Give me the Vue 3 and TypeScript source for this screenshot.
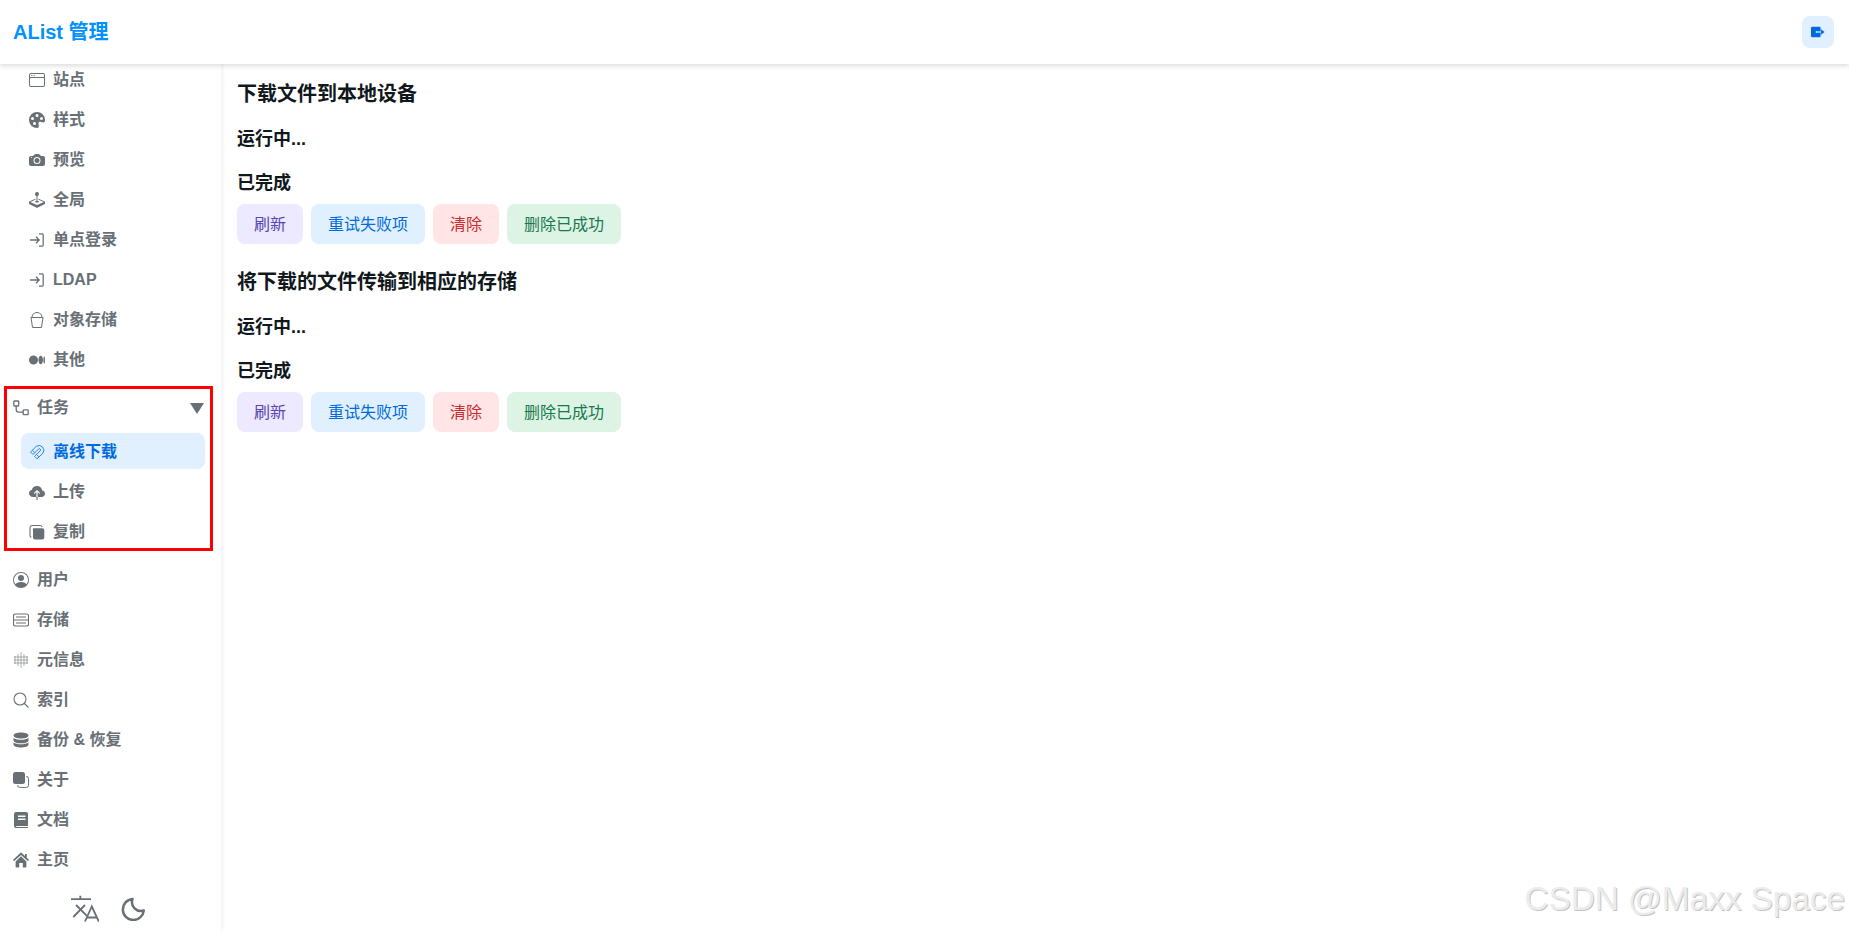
<script setup lang="ts">
interface Shape { d: string; s?: boolean; w?: number }
interface Item { label: string; icon: Shape[]; active?: boolean }

const login: Shape[] = [
  { d: 'M1 8h9M7 4.800 10.200 8 7 11.200M10 1.800h3a1.200 1.200 0 0 1 1.200 1.200v10a1.200 1.200 0 0 1-1.200 1.200h-3', s: true, w: 1.300 },
]
const icons: Record<string, Shape[]> = {
  window: [
    { d: 'M2.500 4a.5.500 0 1 0 0-1 .5.500 0 0 0 0 1zm2-.5a.5.500 0 1 1-1 0 .5.500 0 0 1 1 0zm1 .5a.5.500 0 1 0 0-1 .5.500 0 0 0 0 1z' },
    { d: 'M2 1a2 2 0 0 0-2 2v10a2 2 0 0 0 2 2h12a2 2 0 0 0 2-2V3a2 2 0 0 0-2-2H2zm13 2v2H1V3a1 1 0 0 1 1-1h12a1 1 0 0 1 1 1zM2 14a1 1 0 0 1-1-1V6h14v7a1 1 0 0 1-1 1H2z' },
  ],
  palette: [{ d: 'M12.433 10.070C14.133 10.585 16 11.150 16 8a8 8 0 1 0-8 8c1.996 0 1.826-1.504 1.649-3.080-.124-1.101-.252-2.237.351-2.920.465-.527 1.420-.237 2.433.070zM8 5a1.500 1.500 0 1 1 0-3 1.500 1.500 0 0 1 0 3zm4.500 3a1.500 1.500 0 1 1 0-3 1.500 1.500 0 0 1 0 3zM5 6.500a1.500 1.500 0 1 1-3 0 1.500 1.500 0 0 1 3 0zm.5 6.500a1.500 1.500 0 1 1 0-3 1.500 1.500 0 0 1 0 3z' }],
  camera: [
    { d: 'M10.500 8.500a2.500 2.500 0 1 1-5 0 2.500 2.500 0 0 1 5 0z' },
    { d: 'M2 4a2 2 0 0 0-2 2v6a2 2 0 0 0 2 2h12a2 2 0 0 0 2-2V6a2 2 0 0 0-2-2h-1.172a2 2 0 0 1-1.414-.586l-.828-.828A2 2 0 0 0 9.172 2H6.828a2 2 0 0 0-1.414.586l-.828.828A2 2 0 0 1 3.172 4H2zm.5 2a.5.500 0 1 1 0-1 .5.500 0 0 1 0 1zm9 2.500a3.500 3.500 0 1 1-7 0 3.500 3.500 0 0 1 7 0z' },
  ],
  joystick: [
    { d: 'M10 2a2 2 0 0 1-1.500 1.937v5.087c.863.083 1.500.377 1.500.726 0 .414-.895.750-2 .750s-2-.336-2-.750c0-.350.637-.643 1.500-.726V3.937A2 2 0 1 1 10 2z' },
    { d: 'M0 9.665v1.717a1 1 0 0 0 .553.894l6.553 3.277a2 2 0 0 0 1.788 0l6.553-3.277a1 1 0 0 0 .553-.894V9.665c0-.1-.060-.190-.152-.230L9.500 6.715v.993l5.227 2.178a.125.125 0 0 1 .001.230l-5.940 2.546a2 2 0 0 1-1.576 0l-5.940-2.546a.125.125 0 0 1 .001-.230L6.500 7.708l-.013-.988L.152 9.435a.25.250 0 0 0-.152.230z' },
  ],
  login,
  bucket: [{ d: 'M2.522 5H2a.5.500 0 0 0-.494.574l1.372 9.149A1.500 1.500 0 0 0 4.360 16h7.278a1.500 1.500 0 0 0 1.483-1.277l1.373-9.149A.5.500 0 0 0 14 5h-.522A5.500 5.500 0 0 0 2.522 5zm1.005 0a4.500 4.500 0 0 1 8.945 0H3.527zm9.892 1-1.286 8.574a.5.500 0 0 1-.494.426H4.360a.5.500 0 0 1-.494-.426L2.580 6h10.838z' }],
  medium: [{ d: 'M9.025 8c0 2.485-2.020 4.500-4.513 4.500A4.506 4.506 0 0 1 0 8c0-2.486 2.020-4.500 4.512-4.500A4.506 4.506 0 0 1 9.025 8zm4.950 0c0 2.340-1.010 4.236-2.256 4.236-1.246 0-2.256-1.897-2.256-4.236 0-2.340 1.010-4.236 2.256-4.236 1.246 0 2.256 1.897 2.256 4.236zM16 8c0 2.096-.355 3.795-.794 3.795-.438 0-.793-1.700-.793-3.795 0-2.096.355-3.795.794-3.795.438 0 .793 1.699.793 3.795z' }],
  tasks: [{ d: 'M1.500 1h3.500a.7.700 0 0 1 .7.700v3.600a.7.700 0 0 1-.7.700H1.500a.7.700 0 0 1-.7-.7V1.700a.7.700 0 0 1 .7-.7zM3.200 6v3.800a2.400 2.400 0 0 0 2.400 2.400h4.600M10.900 9.800h3.600a.7.700 0 0 1 .7.700v3.500a.7.700 0 0 1-.7.700h-3.600a.7.700 0 0 1-.7-.7v-3.500a.7.700 0 0 1 .7-.7z', s: true, w: 1.300 }],
  magnet: [{ d: 'M1.500 8 7.300 2.400a4.800 4.800 0 0 1 6.600 6.800L8 14.800l-2.500-2.500 5.700-5.500a1.200 1.200 0 0 0-1.700-1.800L4 10.500zM3.300 6.200l2.500 2.500M7.600 10.500l2.400 2.400', s: true, w: .8 }],
  cloud: [{ d: 'M8 2a5.530 5.530 0 0 0-3.594 1.342c-.766.660-1.321 1.520-1.464 2.383C1.266 6.095 0 7.555 0 9.318 0 11.366 1.708 13 3.781 13H7.400V8.100L5.950 9.550a.55.550 0 0 1-.780-.780l2.440-2.440a.55.550 0 0 1 .780 0l2.440 2.440a.55.550 0 0 1-.780.780L8.600 8.100V13h4.087C14.502 13 16 11.570 16 9.773c0-1.636-1.242-2.969-2.834-3.194C12.923 3.999 10.690 2 8 2zM7.400 13h1.200v2.400a.6.600 0 0 1-1.200 0V13z' }],
  copy: [
    { d: 'M4.800 4.200h8.400a2.100 2.100 0 0 1 2.100 2.100v7.100a2.100 2.100 0 0 1-2.100 2.100H6.100A2.100 2.100 0 0 1 4 13.400V5a.8.800 0 0 1 .8-.8z' },
    { d: 'M13 2.800c-.3-.8-1-1.300-1.900-1.300H3.500A2.500 2.500 0 0 0 1 4v7.600c0 .9.500 1.600 1.300 1.900', s: true, w: 1.100 },
  ],
  user: [
    { d: 'M11 6a3 3 0 1 1-6 0 3 3 0 0 1 6 0z' },
    { d: 'M0 8a8 8 0 1 1 16 0A8 8 0 0 1 0 8zm8-7a7 7 0 0 0-5.468 11.370C3.242 11.226 4.805 10 8 10s4.757 1.225 5.468 2.370A7 7 0 0 0 8 1z' },
  ],
  storage: [{ d: 'M2.200 2h11.600A1.700 1.700 0 0 1 15.500 3.700v8.600a1.700 1.700 0 0 1-1.700 1.700H2.200A1.700 1.700 0 0 1 .5 12.300V3.700A1.700 1.700 0 0 1 2.200 2zM.5 8h15M3 5h10M3 11h10', s: true, w: 1.100 }],
  meta: [{ d: 'M8 0v16M2 4v8M14 4v8M1 5h14M1 8h14M1 11h14M5 2v12M11 2v12', s: true, w: .55 }],
  search: [{ d: 'M7 1a6 6 0 1 1 0 12A6 6 0 0 1 7 1zM11.400 11.400 15.500 15.500', s: true, w: 1.100 }],
  database: [
    { d: 'M8 .5c3.900 0 7.500 1.300 7.500 3S11.900 6.500 8 6.500.5 5.200.5 3.500 4.100.5 8 .5z' },
    { d: 'M.5 5.700C1.800 7.100 5 7.800 8 7.800s6.200-.7 7.500-2.100v2.700c0 1.600-3.600 2.900-7.500 2.900S.5 10 .5 8.400V5.700z' },
    { d: 'M.5 10.200C1.800 11.600 5 12.300 8 12.300s6.200-.7 7.500-2.100v2.300c0 1.700-3.600 3-7.500 3s-7.500-1.300-7.500-3v-2.300z' },
  ],
  about: [
    { d: 'M2.500 0h7A2.500 2.500 0 0 1 12 2.500v7a2.500 2.500 0 0 1-2.500 2.500h-7A2.500 2.500 0 0 1 0 9.500v-7A2.500 2.500 0 0 1 2.500 0z' },
    { d: 'M13 4.600h.6A1.900 1.900 0 0 1 15.500 6.500v7a1.900 1.900 0 0 1-1.900 1.900h-7a1.900 1.900 0 0 1-1.900-1.900V13', s: true, w: 1 },
  ],
  book: [{ d: 'M3 0h10a2 2 0 0 1 2 2v11.500a.5.500 0 0 1-.5.500H3.300A1 1 0 0 0 3.300 15h11.200a.5.500 0 0 1 0 1H3a2 2 0 0 1-2-2V2a2 2 0 0 1 2-2zm2 3.500V5h7.500V3.500H5zm0 3V8h7.500V6.500H5z' }],
  home: [
    { d: 'M7.300.9a1 1 0 0 1 1.400 0l3.300 3.200V2h1.800v3.800l2 2a.6.600 0 0 1-.4 1H14.500L8 3 1.500 8.800H.6a.6.600 0 0 1-.4-1L7.300.9z' },
    { d: 'M8 4.300l5.400 5.200v5a1 1 0 0 1-1 1H9.800v-4.500H6.200V15.500H3.600a1 1 0 0 1-1-1v-5L8 4.300z' },
  ],
}

const settings: Item[] = [
  { label: '站点', icon: icons.window },
  { label: '样式', icon: icons.palette },
  { label: '预览', icon: icons.camera },
  { label: '全局', icon: icons.joystick },
  { label: '单点登录', icon: icons.login },
  { label: 'LDAP', icon: icons.login },
  { label: '对象存储', icon: icons.bucket },
  { label: '其他', icon: icons.medium },
]
const tasks: Item[] = [
  { label: '离线下载', icon: icons.magnet, active: true },
  { label: '上传', icon: icons.cloud },
  { label: '复制', icon: icons.copy },
]
const rest: Item[] = [
  { label: '用户', icon: icons.user },
  { label: '存储', icon: icons.storage },
  { label: '元信息', icon: icons.meta },
  { label: '索引', icon: icons.search },
  { label: '备份 & 恢复', icon: icons.database },
  { label: '关于', icon: icons.about },
  { label: '文档', icon: icons.book },
  { label: '主页', icon: icons.home },
]
const sections = ['下载文件到本地设备', '将下载的文件传输到相应的存储']
const actions = [
  { label: '刷新', tone: 'violet' },
  { label: '重试失败项', tone: 'blue' },
  { label: '清除', tone: 'red' },
  { label: '删除已成功', tone: 'green' },
]
</script>

<template>
  <div class="page">
    <header class="topbar">
      <span class="brand">AList 管理</span>
      <button class="logout" aria-label="退出">
        <svg viewBox="0 0 16 16" width="14" height="14">
          <path fill="#006adc" d="M1.500 2h8A1.500 1.500 0 0 1 11 3.500V6.800H6.500a1.200 1.200 0 0 0 0 2.400H11v3.300A1.500 1.500 0 0 1 9.500 14h-8A1.500 1.500 0 0 1 0 12.500v-9A1.500 1.500 0 0 1 1.500 2z" />
          <path fill="#006adc" opacity=".55" d="M6.500 7.200H11.500v1.600H6.500z" />
          <path fill="#006adc" d="M11.500 4.800 15.500 8l-4 3.200z" />
        </svg>
      </button>
    </header>

    <div class="body">
      <aside class="sidebar">
        <nav class="nav">
          <div class="group nested">
            <a v-for="item in settings" :key="item.label" class="row">
              <svg viewBox="0 0 16 16" class="icon">
                <path v-for="(p, i) in item.icon" :key="i" :d="p.d" :fill="p.s ? 'none' : 'currentColor'" :stroke="p.s ? 'currentColor' : 'none'" :stroke-width="p.w" />
              </svg>
              <span>{{ item.label }}</span>
            </a>
          </div>

          <div class="task-block">
            <a class="row head">
              <svg viewBox="0 0 16 16" class="icon">
                <path v-for="(p, i) in icons.tasks" :key="i" :d="p.d" fill="none" stroke="currentColor" :stroke-width="p.w" />
              </svg>
              <span>任务</span>
              <i class="caret"></i>
            </a>
            <div class="group nested">
              <a v-for="item in tasks" :key="item.label" class="row" :class="{ active: item.active }">
                <svg viewBox="0 0 16 16" class="icon">
                  <path v-for="(p, i) in item.icon" :key="i" :d="p.d" :fill="p.s ? 'none' : 'currentColor'" :stroke="p.s ? 'currentColor' : 'none'" :stroke-width="p.w" />
                </svg>
                <span>{{ item.label }}</span>
              </a>
            </div>
          </div>

          <div class="group">
            <a v-for="item in rest" :key="item.label" class="row">
              <svg viewBox="0 0 16 16" class="icon">
                <path v-for="(p, i) in item.icon" :key="i" :d="p.d" :fill="p.s ? 'none' : 'currentColor'" :stroke="p.s ? 'currentColor' : 'none'" :stroke-width="p.w" />
              </svg>
              <span>{{ item.label }}</span>
            </a>
          </div>
        </nav>

        <div class="tools">
          <svg viewBox="0 0 28 28" width="28" height="28" fill="none" stroke="currentColor" stroke-width="1.800">
            <path d="M0 4.200h20M9.300 .7v3.500M14 10 2.300 22M5 10l10.700 10.700M14 26.500 20.800 11.500l7 15M15.800 22.500h10.200" />
          </svg>
          <svg viewBox="0 0 24 24" width="24" height="24" fill="none" stroke="currentColor" stroke-width="2.500" stroke-linejoin="round">
            <path d="M11.500 2A10.500 10.500 0 1 0 22.800 13.500 9 9 0 0 1 11.500 2z" />
          </svg>
        </div>
      </aside>

      <main class="content">
        <section v-for="title in sections" :key="title" class="section">
          <h1>{{ title }}</h1>
          <h2>运行中...</h2>
          <div class="done">
            <h2>已完成</h2>
            <div class="actions">
              <button v-for="a in actions" :key="a.label" class="btn" :class="a.tone">{{ a.label }}</button>
            </div>
          </div>
        </section>
      </main>
    </div>

    <div class="highlight"></div>
    <div class="watermark">CSDN @Maxx Space</div>
  </div>
</template>

<style>
html, body { margin: 0; background: #fff; overflow: hidden; }
</style>

<style scoped>
.page {
  position: relative;
  width: 1849px;
  height: 932px;
  overflow: hidden;
  display: flex;
  flex-direction: column;
  font-family: "Liberation Sans", "Noto Sans CJK SC", sans-serif;
  line-height: 1.5;
  color: #11181c;
}
.topbar {
  position: relative;
  z-index: 2;
  flex: 0 0 64px;
  display: flex;
  align-items: center;
  justify-content: space-between;
  padding: 0 15px 0 13px;
  background: #fff;
  box-shadow: 0 2px 5px rgba(0, 0, 0, .14);
}
.brand { font-size: 20px; font-weight: 700; color: #0091ff; }
.logout {
  width: 32px;
  height: 32px;
  padding: 0;
  border: 0;
  border-radius: 8px;
  background: #e1f0ff;
  display: flex;
  align-items: center;
  justify-content: center;
}
.body { flex: 1; display: flex; min-height: 0; }
.sidebar {
  flex: 0 0 221px;
  display: flex;
  flex-direction: column;
  overflow: hidden;
  background: #fff;
  color: #687076;
  box-shadow: 1px 0 4px rgba(0, 0, 0, .07);
}
.nav {
  flex: 1;
  min-height: 0;
  margin-top: -3px;
  padding: 0 16px 0 5px;
  display: flex;
  flex-direction: column;
  gap: 12px;
}
.group { display: flex; flex-direction: column; gap: 4px; }
.nested { padding-left: 16px; }
.task-block { display: flex; flex-direction: column; gap: 8px; }
.row {
  box-sizing: border-box;
  height: 36px;
  display: flex;
  align-items: center;
  gap: 8px;
  padding: 2px 8px 0;
  border-radius: 8px;
  font-size: 16px;
  font-weight: 600;
}
.head { position: relative; }
.icon { width: 16px; height: 16px; flex: none; }
.caret {
  margin-left: auto;
  margin-right: -7px;
  width: 0;
  height: 0;
  border-left: 7.500px solid transparent;
  border-right: 7.500px solid transparent;
  border-top: 11px solid #687076;
}
.active { background: #e1f0ff; color: #006adc; }
.tools {
  flex: 0 0 46px;
  display: flex;
  align-items: center;
  justify-content: center;
  gap: 22px;
  padding-right: 5px;
  color: #687076;
}
.content { flex: 1; padding: 15px 16px; display: flex; flex-direction: column; gap: 23px; }
.section { display: flex; flex-direction: column; gap: 17px; }
h1, h2 { margin: 0; font-weight: 700; }
h1 { font-size: 20px; line-height: 30px; }
h2 { font-size: 18px; line-height: 27px; }
.done { display: flex; flex-direction: column; gap: 7px; }
.actions { display: flex; gap: 8px; }
.btn {
  height: 40px;
  padding: 2px 17px 0;
  border: 0;
  border-radius: 8px;
  font: 400 16px/24px "Liberation Sans", "Noto Sans CJK SC", sans-serif;
}
.violet { background: #ede9fe; color: #5746af; }
.blue { background: #e1f0ff; color: #006adc; }
.red { background: #ffe5e5; color: #cd2b31; }
.green { background: #ddf3e4; color: #18794e; }
.highlight {
  position: absolute;
  z-index: 3;
  left: 4px;
  top: 386px;
  width: 209px;
  height: 165px;
  box-sizing: border-box;
  border: 3px solid #ff0000;
}
.watermark {
  position: absolute;
  z-index: 3;
  right: 4px;
  bottom: 11px;
  font-size: 33.300px;
  line-height: 44px;
  white-space: nowrap;
  color: #ececec;
  text-shadow: 1px 1px 0 #c4c4c4;
}
</style>
